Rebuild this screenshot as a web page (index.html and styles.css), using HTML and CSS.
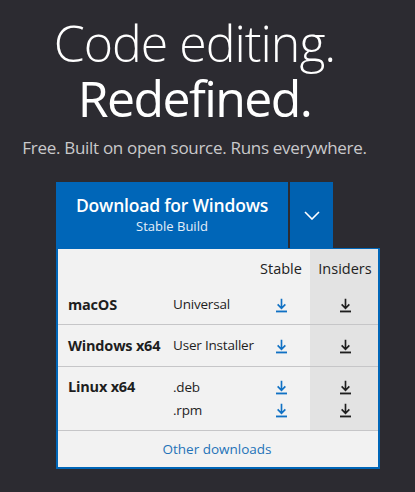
FILE: index.html
```html
<!DOCTYPE html>
<html lang="en">
<head>
<meta charset="utf-8">
<title>Code editing. Redefined.</title>
<link rel="stylesheet" href="styles.css">
</head>
<body>
<main class="hero">
  <h1 class="title"><span class="light">Code editing.</span><span class="bold">Redefined.</span></h1>
  <p class="tagline">Free. Built on open source. Runs everywhere.</p>

  <div class="download">
    <div class="btn-row">
      <a class="btn-main" href="#">
        <span class="btn-title">Download for Windows</span>
        <span class="btn-sub">Stable Build</span>
      </a>
      <button class="btn-toggle" aria-label="More downloads">
        <svg width="16" height="9" viewBox="0 0 16 9"><path d="M1 1l7 7 7-7" fill="none" stroke="#fff" stroke-width="1.6"/></svg>
      </button>
    </div>

    <div class="panel">
      <table class="dl-table">
        <colgroup><col class="c1"><col class="c2"><col class="c3"><col class="c4"></colgroup>
        <thead>
          <tr><th></th><th></th><th class="ic">Stable</th><th class="ic ins">Insiders</th></tr>
        </thead>
        <tbody>
          <tr>
            <td class="os">macOS</td><td class="kind">Universal</td>
            <td class="ic"><svg class="dl blue" viewBox="0 0 12 16"><path d="M6 0.5v10.5M1.8 6.8L6 11l4.2-4.2" fill="none" stroke="currentColor" stroke-width="1.8"/><rect x="0" y="13.5" width="12" height="2" fill="currentColor"/></svg></td>
            <td class="ic ins"><svg class="dl" viewBox="0 0 12 16"><path d="M6 0.5v10.5M1.8 6.8L6 11l4.2-4.2" fill="none" stroke="currentColor" stroke-width="1.8"/><rect x="0" y="13.5" width="12" height="2" fill="currentColor"/></svg></td>
          </tr>
          <tr>
            <td class="os">Windows x64</td><td class="kind">User Installer</td>
            <td class="ic"><svg class="dl blue" viewBox="0 0 12 16"><path d="M6 0.5v10.5M1.8 6.8L6 11l4.2-4.2" fill="none" stroke="currentColor" stroke-width="1.8"/><rect x="0" y="13.5" width="12" height="2" fill="currentColor"/></svg></td>
            <td class="ic ins"><svg class="dl" viewBox="0 0 12 16"><path d="M6 0.5v10.5M1.8 6.8L6 11l4.2-4.2" fill="none" stroke="currentColor" stroke-width="1.8"/><rect x="0" y="13.5" width="12" height="2" fill="currentColor"/></svg></td>
          </tr>
          <tr class="multi">
            <td class="os">Linux x64</td>
            <td class="kind"><div class="line">.deb</div><div class="line">.rpm</div></td>
            <td class="ic">
              <div class="line"><svg class="dl blue" viewBox="0 0 12 16"><path d="M6 0.5v10.5M1.8 6.8L6 11l4.2-4.2" fill="none" stroke="currentColor" stroke-width="1.8"/><rect x="0" y="13.5" width="12" height="2" fill="currentColor"/></svg></div>
              <div class="line"><svg class="dl blue" viewBox="0 0 12 16"><path d="M6 0.5v10.5M1.8 6.8L6 11l4.2-4.2" fill="none" stroke="currentColor" stroke-width="1.8"/><rect x="0" y="13.5" width="12" height="2" fill="currentColor"/></svg></div>
            </td>
            <td class="ic ins">
              <div class="line"><svg class="dl" viewBox="0 0 12 16"><path d="M6 0.5v10.5M1.8 6.8L6 11l4.2-4.2" fill="none" stroke="currentColor" stroke-width="1.8"/><rect x="0" y="13.5" width="12" height="2" fill="currentColor"/></svg></div>
              <div class="line"><svg class="dl" viewBox="0 0 12 16"><path d="M6 0.5v10.5M1.8 6.8L6 11l4.2-4.2" fill="none" stroke="currentColor" stroke-width="1.8"/><rect x="0" y="13.5" width="12" height="2" fill="currentColor"/></svg></div>
            </td>
          </tr>
        </tbody>
      </table>
      <a class="other" href="#">Other downloads</a>
    </div>
  </div>
</main>
</body>
</html>
```

FILE: styles.css
```css
* { box-sizing: border-box; }
html, body { margin: 0; padding: 0; }
body {
  background: #2c2b31;
  font-family: "Open Sans", "Noto Sans", sans-serif;
  color: #fff;
  width: 415px;
  height: 492px;
  overflow: hidden;
}
.hero {
  display: flex;
  flex-direction: column;
}
.title {
  margin: 0;
  padding: 16px 26px 0 0;
  display: flex;
  flex-direction: column;
  align-items: center;
  font-size: 50px;
  line-height: 55px;
  letter-spacing: -1px;
}
.title .light { font-weight: 300; }
.title .bold { font-weight: 500; letter-spacing: -1.6px; }
.tagline {
  margin: 10px 0 0;
  padding-right: 26px;
  text-align: center;
  font-size: 17px;
  line-height: 24px;
  color: #c9c9cb;
  letter-spacing: -0.3px;
}
.download {
  margin: 22px 0 0 56px;
  width: 324px;
}
.btn-row {
  display: flex;
  gap: 2px;
  height: 66px;
}
.btn-main {
  width: 232px;
  background: #0066b8;
  color: #fff;
  text-decoration: none;
  display: flex;
  flex-direction: column;
  align-items: center;
  padding-top: 11px;
}
.btn-title {
  font-size: 17.5px;
  font-weight: 600;
  line-height: 24px;
  letter-spacing: -0.2px;
}
.btn-sub {
  font-size: 13px;
  line-height: 19px;
  color: #e4eef8;
}
.btn-toggle {
  width: 43px;
  border: 0;
  padding: 0;
  margin: 0;
  background: #0061b0;
  display: flex;
  align-items: center;
  justify-content: center;
}
.panel {
  background: #f2f2f2;
  border: 2px solid #0066b8;
  border-top-width: 1px;
  color: #1e1e1e;
}
.dl-table {
  width: 100%;
  border-collapse: collapse;
  table-layout: fixed;
  font-size: 13.5px;
}
.c1 { width: 112px; }
.c2 { width: 82px; }
.c3 { width: 58px; }
.c4 { width: 68px; }
.dl-table th {
  font-weight: 400;
  font-size: 14.5px;
  height: 36px;
  padding: 10px 0 0;
  vertical-align: top;
  color: #222;
}
.dl-table td {
  height: 40px;
  border-bottom: 1px solid #c6c6c8;
  padding: 0;
  vertical-align: middle;
  white-space: nowrap;
}
.dl-table tbody tr:first-child td { height: 39px; }
.dl-table tbody tr:nth-child(2) td { height: 42px; }
.dl-table .os {
  padding-left: 10px;
  font-weight: 700;
  font-size: 14.5px;
  letter-spacing: -0.2px;
}
.dl-table .kind { padding-left: 3px; letter-spacing: -0.2px; overflow: visible; }
.dl-table .ic { text-align: center; }
.dl-table .ins { background: #e3e3e3; }
.dl-table .ic.ins { padding-left: 2px; }
.dl-table .multi td {
  height: 64px;
  vertical-align: top;
  padding-top: 10px;
}
.dl-table .multi .os { padding-top: 10px; }
.line {
  height: 23px;
  line-height: 20px;
}
.dl {
  width: 11px;
  height: 15px;
  color: #1e1e1e;
  vertical-align: middle;
}
.dl.blue { color: #1071c4; }
.other {
  display: block;
  text-align: center;
  color: #2473b8;
  text-decoration: none;
  font-size: 13.5px;
  line-height: 36px;
  padding-right: 2px;
}
```
